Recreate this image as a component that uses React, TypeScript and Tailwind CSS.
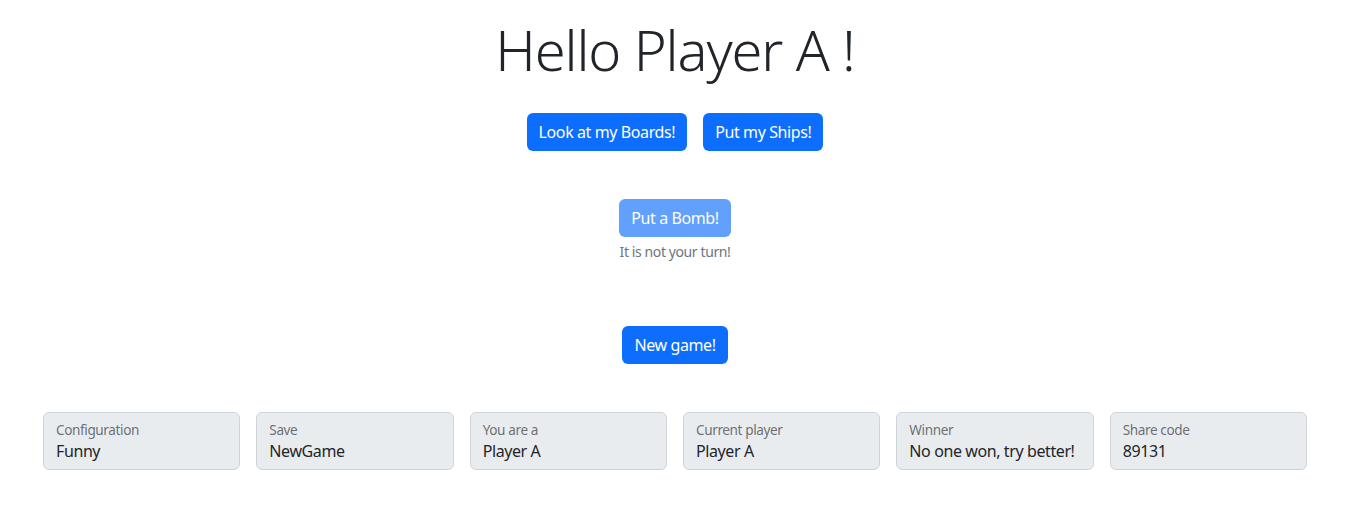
export default function App() {
  const infos = [
    { label: 'Configuration', value: 'Funny' },
    { label: 'Save', value: 'NewGame' },
    { label: 'You are a', value: 'Player A' },
    { label: 'Current player', value: 'Player A' },
    { label: 'Winner', value: 'No one won, try better!' },
    { label: 'Share code', value: '89131' },
  ]

  return (
    <div className="min-h-[530px] bg-white text-[#212529] font-['Noto_Sans',sans-serif] tracking-[-0.025em] flex flex-col items-center pt-4 pr-[10px]">
      <h1 className="text-[56px] leading-[1.2] font-light tracking-[-0.02em]">Hello Player A !</h1>

      <div className="flex gap-4 mt-[30px]">
        <button className="bg-[#0d6efd] text-white text-base leading-6 px-3 py-[7px] rounded-md">Look at my Boards!</button>
        <button className="bg-[#0d6efd] text-white text-base leading-6 px-3 py-[7px] rounded-md">Put my Ships!</button>
      </div>

      <button disabled className="mt-12 bg-[#0d6efd] opacity-65 text-white text-base leading-6 px-3 py-[7px] rounded-md">
        Put a Bomb!
      </button>
      <p className="mt-1 text-sm leading-[21px] text-[#6c757d]">It is not your turn!</p>

      <button className="mt-16 bg-[#0d6efd] text-white text-base leading-6 px-3 py-[7px] rounded-md">New game!</button>

      <div className="mt-12 w-[1264px] grid grid-cols-6 gap-4">
        {infos.map((i) => (
          <div key={i.label} className="h-[58px] bg-[#e9ecef] border border-[#ced4da] rounded-md px-3 pt-2 flex flex-col whitespace-nowrap">
            <span className="text-[13.6px] leading-[18px] text-[#212529]/65">{i.label}</span>
            <span className="text-base leading-6">{i.value}</span>
          </div>
        ))}
      </div>
    </div>
  )
}
